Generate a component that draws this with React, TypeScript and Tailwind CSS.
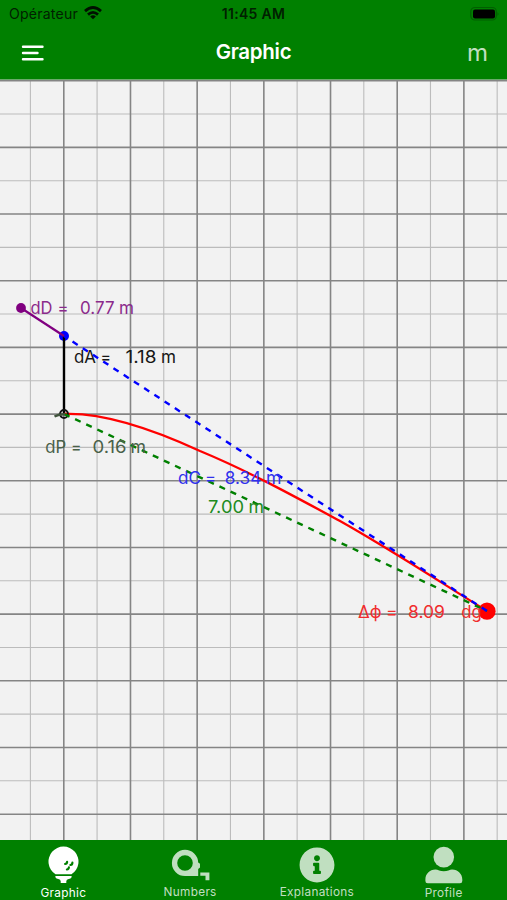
import { FaInfoCircle } from "react-icons/fa";
import type { ReactNode } from "react";

const STEP = 66.68;
const majorX = Array.from({ length: 7 }, (_, i) => 63.8 + i * STEP);
const minorX = Array.from({ length: 8 }, (_, i) => 30.4 + i * STEP);
const majorY = Array.from({ length: 12 }, (_, i) => 0.7 + i * STEP);
const minorY = Array.from({ length: 11 }, (_, i) => 34 + i * STEP);

// Each part is [text, left edge, width].
type Part = [string, number, number];

function Label({ y, fill, parts }: { y: number; fill: string; parts: Part[] }) {
  return (
    <g fill={fill} className="text-[17px]">
      {parts.map(([text, x, width]) => (
        <text key={text} x={x} y={y} textLength={width} lengthAdjust="spacingAndGlyphs">{text}</text>
      ))}
    </g>
  );
}

function Chart() {
  return (
    <svg className="block h-[760px] w-full bg-[#f2f2f2]" viewBox="0 0 507 760">
      <g stroke="#bcbcbc" strokeWidth="1.1">
        {minorX.map((x) => <line key={x} x1={x} x2={x} y1="0" y2="760" />)}
        {minorY.map((y) => <line key={y} x1="0" x2="507" y1={y} y2={y} />)}
      </g>
      <g stroke="#858585" strokeWidth="1.6">
        {majorX.map((x) => <line key={x} x1={x} x2={x} y1="0" y2="760" />)}
        {majorY.map((y) => <line key={y} x1="0" x2="507" y1={y} y2={y} />)}
      </g>
      <g transform="translate(0 -80)" fill="none">
        <circle cx="487" cy="611.2" r="8.6" fill="#ff0000" />
        <circle cx="64" cy="336" r="5" fill="#0000ff" />
        <path d="M64 336V414" stroke="#000" strokeWidth="2.4" />
        <path d="M64 414C100 412.5 150 428 200 451C246 470 292 495 340 521C390 549 440 582 487 611" stroke="#ff0000" strokeWidth="2.3" />
        <circle cx="64" cy="414" r="3.9" stroke="#111" strokeWidth="2" />
        <path d="M64 414L487 611" stroke="#008000" strokeWidth="2.4" strokeDasharray="6.1 6.15" />
        <path d="M64 336L487 611" stroke="#0000ff" strokeWidth="2.4" strokeDasharray="6.1 6.1" strokeDashoffset="2" />
        <path d="M54.5 416.5C58 414.7 61 414.2 65 414.3" stroke="#40543c" strokeWidth="2.4" />
        <path d="M21 308L64 336" stroke="#800080" strokeWidth="2.2" />
        <circle cx="21" cy="308" r="4.9" fill="#800080" />
        <Label y={314} fill="#8b2a8b" parts={[["dD", 30.5, 22], ["=", 57.5, 11], ["0.77", 80, 34.5], ["m", 119, 15]]} />
        <Label y={363} fill="#171717" parts={[["dA", 74, 22], ["=", 100.5, 10.5], ["1.18", 125.5, 31], ["m", 161, 15]]} />
        <Label y={452.5} fill="#496149" parts={[["dP", 45.3, 21], ["=", 71, 10.5], ["0.16", 92.5, 34], ["m", 130.5, 15.5]]} />
        <Label y={484} fill="#3030ed" parts={[["dC", 178, 23], ["=", 205, 11], ["8.34", 224.8, 36.5], ["m", 266, 15.5]]} />
        <Label y={513} fill="#218b21" parts={[["7.00", 208, 36], ["m", 248.5, 15.5]]} />
        <Label y={617.5} fill="#f02c2c" parts={[["Δϕ", 358, 23.5], ["=", 386, 11.5], ["8.09", 408, 37], ["dg", 461.3, 20.5]]} />
      </g>
    </svg>
  );
}

function GolfIcon() {
  return (
    <svg className="ml-[1px] h-[38px] w-[31px]" viewBox="0 0 31 38" fill="currentColor">
      <path d="M7.5 28.3A15 15 0 1 1 23.5 28.3Z" />
      <path d="M7.4 30.1H23.6V31.2Q22.8 32.9 20.7 32.9Q18.3 33 18.3 35.2V37H12.7V35.2Q12.7 33 10.3 32.9Q8.2 32.9 7.4 31.2Z" />
      <g fill="none" stroke="#008000" strokeWidth="2.2" strokeLinecap="round">
        <path d="M19.1 15.9Q19 17.8 17.1 18M24.4 16.7Q24.4 18.8 22.4 19M20.9 21.3Q20.8 23.4 18.9 23.5" />
      </g>
    </svg>
  );
}

function TapeIcon() {
  return (
    <svg className="h-[32px] w-[39px]" viewBox="0 0 39 32" fill="currentColor">
      <path fillRule="evenodd" d="M14 0.8A13.2 13.2 0 0 1 27.2 13.5L29 14.7V18.6L27.2 20V27H14A13.1 13.1 0 0 1 14 .8ZM14 6.2A7.8 7.8 0 1 0 14 21.8A7.8 7.8 0 1 0 14 6.2Z" />
      <path d="M29.3 23.4H38.4V31.2H34.5V26.8H29.3Z" />
    </svg>
  );
}

function ProfileIcon() {
  return (
    <svg className="h-[38px] w-[38px]" viewBox="0 0 38 38" fill="currentColor">
      <circle cx="18.8" cy="11.1" r="10.3" />
      <path d="M10.5 23.5C13 23.5 15 25.3 18.8 25.3S24.6 23.5 27.1 23.5C33 23.5 37.3 28 37.3 33.5V35Q37.3 37.3 35 37.3H2.7Q.4 37.3 .4 35V33.5C.4 28 4.6 23.5 10.5 23.5Z" />
    </svg>
  );
}

function WifiIcon() {
  return (
    <svg className="ml-[6px] h-[14px] w-[18px]" viewBox="0 0 18 14" fill="none" stroke="#001000" strokeWidth="2.8">
      <path d="M1 5.1Q9-2.1 17 5.1M4 8.6Q9 4.1 14 8.6" />
      <path d="M9 13.3L6.1 10.5Q9 8 11.9 10.5Z" fill="#001000" stroke="none" />
    </svg>
  );
}

function Tab({ label, active = false, children }: { label: string; active?: boolean; children: ReactNode }) {
  return (
    <button className={`flex flex-1 flex-col items-center ${active ? "text-white" : "text-[#c0dfc0]"}`}>
      <span className="flex h-[44px] items-center justify-center pt-[6px]">{children}</span>
      <span className="pt-[1px] text-[11.8px] leading-[16px] tracking-[0.3px]">{label}</span>
    </button>
  );
}

export default function App() {
  return (
    <div className="flex h-[900px] w-[507px] flex-col overflow-hidden bg-[#008000] font-['Inter','Liberation_Sans',sans-serif]">
      <header className="h-[80px] shrink-0 border-b border-[#6caa6c]">
        <div className="grid h-[27px] grid-cols-3 items-center px-[9px] text-[#002000]">
          <div className="flex items-center">
            <span className="text-[14.1px] tracking-[0.2px]">Opérateur</span>
            <WifiIcon />
          </div>
          <span className="text-center text-[14px] font-semibold tracking-[0.3px]">11:45 AM</span>
          <svg className="mr-[-1px] h-[16px] w-[30px] justify-self-end" viewBox="0 0 30 16">
            <rect x="1.8" y="1.5" width="25.5" height="12.5" rx="4" fill="none" stroke="#005f00" strokeWidth="1.2" />
            <rect x="4" y="3.5" width="22" height="9" rx="2" />
            <path d="M28.5 6Q30.5 8 28.5 10Z" fill="#005f00" />
          </svg>
        </div>
        <div className="grid h-[51px] grid-cols-3 items-center px-[19px] text-white">
          <svg className="ml-[2px] h-[18px] w-[24px]" viewBox="0 0 24 18" stroke="currentColor" strokeWidth="2.4" strokeLinecap="round">
            <path d="M2 2.8H21.5M2 9H16.5M2 15.2H21.5" />
          </svg>
          <h1 className="text-center text-[20.5px] font-semibold tracking-[-0.3px]">Graphic</h1>
          <span className="justify-self-end pt-[1px] text-[24px] text-[#c0dfc0]">m</span>
        </div>
      </header>
      <Chart />
      <nav className="flex h-[60px] shrink-0">
        <Tab label="Graphic" active><GolfIcon /></Tab>
        <Tab label="Numbers"><TapeIcon /></Tab>
        <Tab label="Explanations"><FaInfoCircle className="size-[36px]" /></Tab>
        <Tab label="Profile"><ProfileIcon /></Tab>
      </nav>
    </div>
  );
}
